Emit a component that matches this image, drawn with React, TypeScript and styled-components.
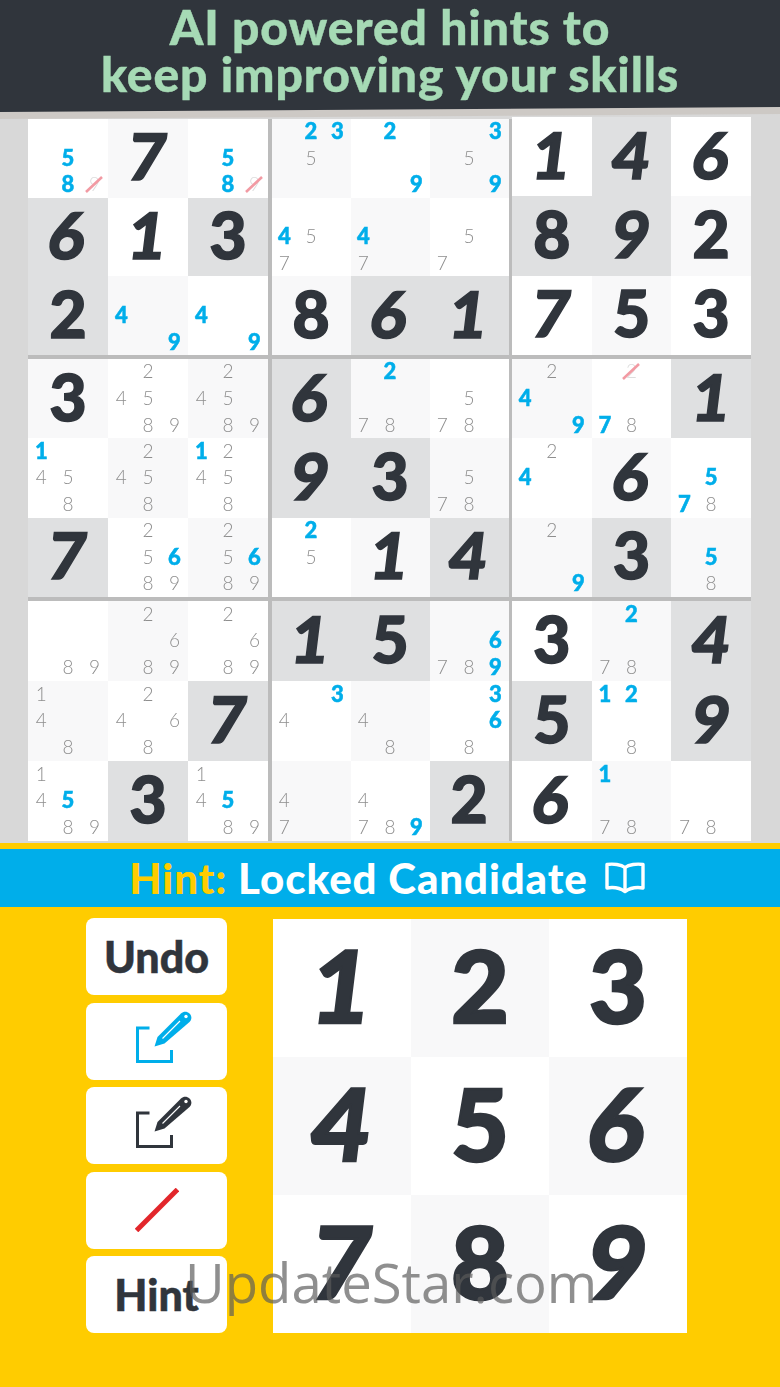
import React from "react";
import styled, { createGlobalStyle } from "styled-components";

const GlobalStyle = createGlobalStyle`
  html, body {
    margin: 0;
    padding: 0;
    background: #ffcc00;
  }
  * {
    box-sizing: border-box;
  }
`;

const DISPLAY = `"Lato", "Liberation Sans", sans-serif`;
const DARK = "#30353c";
const BLUE = "#00aeea";

type Tint = "white" | "light" | "dark";

const tints: Record<Tint, string> = {
  white: "#ffffff",
  light: "#f8f8f9",
  dark: "#dfe0e1",
};

// these digits lean in the reference's face, the others stand upright
const leans = (digit: string) => "14679".includes(digit);

const Page = styled.div`
  position: relative;
  width: 780px;
  height: 1387px;
  overflow: hidden;
  background: #ffcc00;
  font-family: ${DISPLAY};
`;

const Masthead = styled.div`
  position: relative;
  z-index: 1;
  filter: drop-shadow(0 7px 0 #cdc9c5);
`;

const Banner = styled.header`
  height: 112px;
  background: ${DARK};
  color: #a6dab5;
  font-weight: 900;
  font-size: 48px;
  line-height: 47px;
  letter-spacing: 0.9px;
  text-align: center;
  padding-top: 3px;
  -webkit-text-stroke: 0.4px #a6dab5;
  clip-path: polygon(0 0, 100% 0, 100% 95.5%, 0 100%);
`;

const BoardArea = styled.section`
  height: 731px;
  background: #d8d8d8;
  padding: 7px 0 0 28px;
`;

const Board = styled.div`
  display: grid;
  grid-template-columns: 240px 237px 239px;
  grid-template-rows: 236px 238px 240px;
  gap: 4px 3.5px;
  background: #bcbcbc;
  width: 723px;
`;

const Box = styled.div<{ $lift?: boolean }>`
  display: grid;
  grid-template-columns: repeat(3, minmax(0, 1fr));
  grid-template-rows: repeat(3, minmax(0, 1fr));
  margin-top: ${(p) => (p.$lift ? -2 : 0)}px;
`;

const Cell = styled.div<{ $tint: Tint }>`
  position: relative;
  display: flex;
  align-items: center;
  justify-content: center;
  background: ${(p) => tints[p.$tint]};
`;

const Given = styled.span<{ $lean: boolean }>`
  display: inline-block;
  font-weight: 900;
  font-size: 64px;
  line-height: 1;
  color: ${DARK};
  -webkit-text-stroke: 1.6px ${DARK};
  transform: translateY(-2px) skewX(${(p) => (p.$lean ? -7 : 0)}deg);
`;

const Notes = styled.div`
  flex: none;
  display: grid;
  width: 80px;
  height: 80px;
  margin-top: -2px;
  grid-template-columns: repeat(3, 26.6px);
  grid-template-rows: repeat(3, 26.6px);
`;

const Note = styled.span<{ $hot?: boolean; $faint?: boolean; $at: number }>`
  position: relative;
  will-change: opacity;
  grid-column: ${(p) => ((p.$at - 1) % 3) + 1};
  grid-row: ${(p) => Math.floor((p.$at - 1) / 3) + 1};
  display: flex;
  align-items: center;
  justify-content: center;
  font-size: ${(p) => (p.$hot ? 22 : 19)}px;
  font-weight: ${(p) => (p.$hot ? 900 : 300)};
  color: ${(p) => (p.$hot ? BLUE : p.$faint ? "#dddddd" : "#8e8e8e")};
  -webkit-text-stroke: ${(p) => (p.$hot ? `0.5px ${BLUE}` : "0")};
`;

const Slash = styled.svg`
  position: absolute;
  left: 4px;
  top: 4px;
  width: 18px;
  height: 18px;
`;

const HintBar = styled.div`
  height: 64px;
  border-top: 6px solid #ffcc00;
  background: ${BLUE};
  color: #ffffff;
  display: flex;
  align-items: center;
  justify-content: center;
  gap: 17px;
  padding-right: 6px;
  font-size: 42px;
  font-weight: 900;
  letter-spacing: 0.9px;
`;

const HintLabel = styled.span`
  color: #ffcc00;
`;

const Controls = styled.section`
  display: flex;
  padding: 11px 0 0 86px;
  gap: 46px;
`;

const Tools = styled.div`
  display: flex;
  flex-direction: column;
  gap: 7.5px;
  width: 141px;
`;

const Tool = styled.div`
  height: 77px;
  border-radius: 8px;
  background: #ffffff;
  display: flex;
  align-items: center;
  justify-content: center;
  color: ${DARK};
  font-size: 43px;
  font-weight: 900;
  -webkit-text-stroke: 0.5px ${DARK};
`;

const Pad = styled.div`
  margin-top: 1px;
  display: grid;
  grid-template-columns: repeat(3, 138px);
  grid-template-rows: repeat(3, 138px);
`;

const PadKey = styled.div<{ $tint: Tint }>`
  display: flex;
  align-items: center;
  justify-content: center;
  background: ${(p) => tints[p.$tint]};
  color: ${DARK};
`;

const PadDigit = styled.span<{ $lean: boolean }>`
  display: inline-block;
  font-size: 100px;
  line-height: 1;
  font-weight: 900;
  -webkit-text-stroke: 2.4px ${DARK};
  transform: translateY(-4px) skewX(${(p) => (p.$lean ? -7 : 0)}deg);
`;

const PencilSvg = styled.svg`
  margin: -8px 0 0 14px;
`;

const Watermark = styled.div`
  position: absolute;
  left: 185px;
  top: 1245px;
  font-family: "Open Sans", sans-serif;
  font-weight: 400;
  font-size: 54.5px;
  line-height: 75px;
  color: rgba(90, 90, 90, 0.68);
  white-space: nowrap;
`;

// lone digit = given, longer string = notes; * = blue note, x = struck out note
const rows: [string, Tint][][] = [
  [["5*8*9x", "white"], ["7", "light"], ["5*8*9x", "white"], ["2*3*5", "light"], ["2*9*", "white"], ["3*59*", "light"], ["1", "white"], ["4", "dark"], ["6", "white"]],
  [["6", "dark"], ["1", "white"], ["3", "dark"], ["4*57", "white"], ["4*7", "light"], ["57", "white"], ["8", "dark"], ["9", "dark"], ["2", "light"]],
  [["2", "dark"], ["4*9*", "light"], ["4*9*", "white"], ["8", "light"], ["6", "dark"], ["1", "dark"], ["7", "white"], ["5", "light"], ["3", "white"]],
  [["3", "light"], ["24589", "white"], ["24589", "light"], ["6", "dark"], ["2*78", "light"], ["578", "white"], ["24*9*", "light"], ["2x7*8", "white"], ["1", "dark"]],
  [["1*458", "white"], ["2458", "light"], ["1*2458", "white"], ["9", "dark"], ["3", "dark"], ["578", "light"], ["24*", "white"], ["6", "light"], ["5*7*8", "white"]],
  [["7", "dark"], ["256*89", "white"], ["256*89", "light"], ["2*5", "white"], ["1", "light"], ["4", "dark"], ["29*", "light"], ["3", "dark"], ["5*8", "light"]],
  [["89", "white"], ["2689", "light"], ["2689", "white"], ["1", "dark"], ["5", "dark"], ["6*789*", "light"], ["3", "white"], ["2*78", "light"], ["4", "dark"]],
  [["148", "light"], ["2468", "white"], ["7", "dark"], ["3*4", "white"], ["48", "light"], ["3*6*8", "white"], ["5", "dark"], ["1*2*8", "white"], ["9", "dark"]],
  [["145*89", "white"], ["3", "dark"], ["145*89", "white"], ["47", "light"], ["4789*", "white"], ["2", "dark"], ["6", "white"], ["1*78", "light"], ["78", "white"]],
];

const parseNotes = (s: string) =>
  Array.from(s.matchAll(/(\d)([*x]?)/g)).map((m) => ({
    at: Number(m[1]),
    mark: m[2],
  }));

const PencilIcon = ({ color }: { color: string }) => (
  <PencilSvg width="58" height="54" viewBox="0 0 58 54" fill="none">
    <path d="M14.5 18H2.5V51.5H36.5V40" stroke={color} strokeWidth="3" />
    <path
      d="M19.5 36.5L22.5 27L46 3.5C48.5 1 52 1 54.5 3.5C57 6 57 9.5 54.5 12L29.5 33.5Z"
      fill={color}
    />
    <circle cx="51" cy="6.5" r="1.7" fill="#fff" />
    <path d="M27.5 28.5L45 11" stroke="#fff" strokeWidth="1.1" />
  </PencilSvg>
);

const LineIcon = () => (
  <svg width="44" height="44" viewBox="0 0 44 44">
    <line x1="1.5" y1="42.5" x2="42.5" y2="1.5" stroke="#e2262b" strokeWidth="5" />
  </svg>
);

const BookIcon = () => (
  <svg width="40" height="32" viewBox="0 0 40 32" fill="none" stroke="#fff" strokeWidth="3.4" strokeLinejoin="round">
    <path d="M20 5.5C16 2.5 8 1.5 2 2.5V26C8 25 15 26 20 29.5C25 26 32 25 38 26V2.5C32 1.5 24 2.5 20 5.5Z" />
    <path d="M20 5.5V29.5" />
  </svg>
);

const BoardCell = ({ value, tint }: { value: string; tint: Tint }) => (
  <Cell $tint={tint}>
    {value.length === 1 ? (
      <Given $lean={leans(value)}>{value}</Given>
    ) : (
      <Notes>
        {parseNotes(value).map(({ at, mark }) => (
          <Note key={at} $at={at} $hot={mark === "*"} $faint={mark === "x"}>
            {at}
            {mark === "x" && (
              <Slash viewBox="0 0 18 18">
                <line x1="1" y1="17" x2="17" y2="2" stroke="#f29aa3" strokeWidth="2.6" />
              </Slash>
            )}
          </Note>
        ))}
      </Notes>
    )}
  </Cell>
);

const boxes = [0, 1, 2, 3, 4, 5, 6, 7, 8].map((b) => {
  const r0 = Math.floor(b / 3) * 3;
  const c0 = (b % 3) * 3;
  return [0, 1, 2].flatMap((r) => [0, 1, 2].map((c) => rows[r0 + r][c0 + c]));
});

const padTints: Tint[] = ["white", "light", "white", "light", "white", "light", "white", "light", "white"];

export default function App(): React.ReactElement {
  return (
    <Page>
      <GlobalStyle />
      <Masthead>
        <Banner>
          AI powered hints to
          <br />
          keep improving your skills
        </Banner>
      </Masthead>
      <BoardArea>
        <Board>
          {boxes.map((cells, i) => (
            <Box key={i} $lift={i === 2}>
              {cells.map(([value, tint], j) => (
                <BoardCell key={j} value={value} tint={tint} />
              ))}
            </Box>
          ))}
        </Board>
      </BoardArea>
      <HintBar>
        <span>
          <HintLabel>Hint:</HintLabel> Locked Candidate
        </span>
        <BookIcon />
      </HintBar>
      <Controls>
        <Tools>
          <Tool>Undo</Tool>
          <Tool>
            <PencilIcon color={BLUE} />
          </Tool>
          <Tool>
            <PencilIcon color={DARK} />
          </Tool>
          <Tool>
            <LineIcon />
          </Tool>
          <Tool>Hint</Tool>
        </Tools>
        <Pad>
          {padTints.map((tint, i) => (
            <PadKey key={i} $tint={tint}>
              <PadDigit $lean={leans(String(i + 1))}>{i + 1}</PadDigit>
            </PadKey>
          ))}
        </Pad>
      </Controls>
      <Watermark>UpdateStar.com</Watermark>
    </Page>
  );
}
